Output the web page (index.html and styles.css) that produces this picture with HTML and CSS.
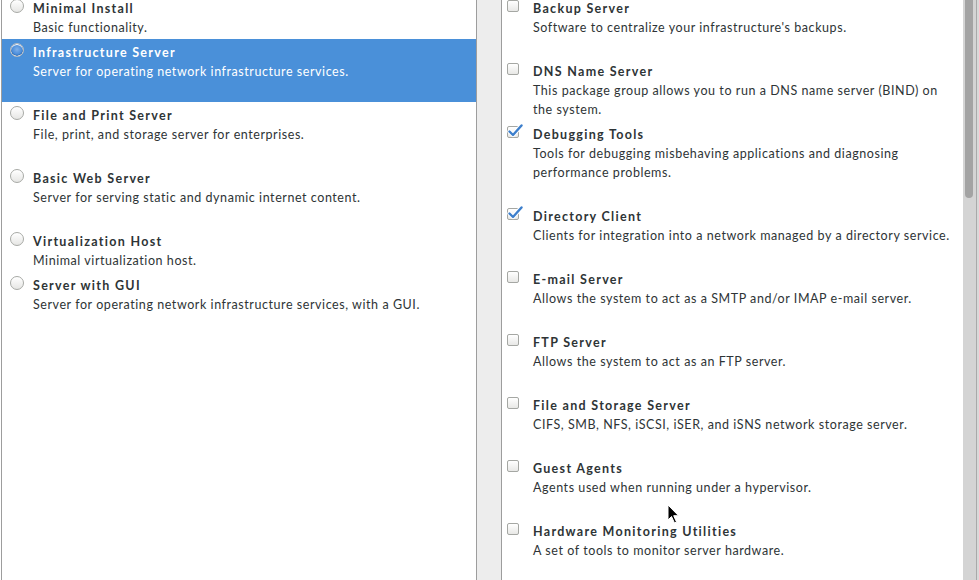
FILE: index.html
```html
<!DOCTYPE html>
<html>
<head>
<meta charset="utf-8">
<link rel="stylesheet" href="styles.css">
</head>
<body>
<div class="screen">
  <div class="left-wrap">
    <div class="panel left">
      <div class="list">
        <div class="env short">
          <span class="radio"></span>
          <div class="text"><div class="title">Minimal Install</div><div class="desc">Basic functionality.</div></div>
        </div>
        <div class="env selected">
          <span class="radio on"></span>
          <div class="text"><div class="title">Infrastructure Server</div><div class="desc">Server for operating network infrastructure services.</div></div>
        </div>
        <div class="env">
          <span class="radio"></span>
          <div class="text"><div class="title">File and Print Server</div><div class="desc">File, print, and storage server for enterprises.</div></div>
        </div>
        <div class="env">
          <span class="radio"></span>
          <div class="text"><div class="title">Basic Web Server</div><div class="desc">Server for serving static and dynamic internet content.</div></div>
        </div>
        <div class="env short">
          <span class="radio"></span>
          <div class="text"><div class="title">Virtualization Host</div><div class="desc">Minimal virtualization host.</div></div>
        </div>
        <div class="env short">
          <span class="radio"></span>
          <div class="text"><div class="title">Server with GUI</div><div class="desc">Server for operating network infrastructure services, with a GUI.</div></div>
        </div>
      </div>
    </div>
  </div>
  <div class="gap"></div>
  <div class="panel right">
    <div class="content">
      <div class="list">
        <div class="addon">
          <span class="check"></span>
          <div class="text"><div class="title">Backup Server</div><div class="desc">Software to centralize your infrastructure's backups.</div></div>
        </div>
        <div class="addon tight">
          <span class="check"></span>
          <div class="text"><div class="title">DNS Name Server</div><div class="desc">This package group allows you to run a DNS name server (BIND) on the system.</div></div>
        </div>
        <div class="addon">
          <span class="check on"><svg viewBox="0 0 16 14" width="16" height="14"><path d="M2.5 7.5 L6 11 L14.5 1.5" fill="none" stroke="#ffffff" stroke-width="4.2" stroke-linecap="round" stroke-linejoin="round"/><path d="M2.5 7.5 L6 11 L14.5 1.5" fill="none" stroke="#3d7fcc" stroke-width="2.4" stroke-linecap="round" stroke-linejoin="round"/></svg></span>
          <div class="text"><div class="title">Debugging Tools</div><div class="desc">Tools for debugging misbehaving applications and diagnosing performance problems.</div></div>
        </div>
        <div class="addon">
          <span class="check on"><svg viewBox="0 0 16 14" width="16" height="14"><path d="M2.5 7.5 L6 11 L14.5 1.5" fill="none" stroke="#ffffff" stroke-width="4.2" stroke-linecap="round" stroke-linejoin="round"/><path d="M2.5 7.5 L6 11 L14.5 1.5" fill="none" stroke="#3d7fcc" stroke-width="2.4" stroke-linecap="round" stroke-linejoin="round"/></svg></span>
          <div class="text"><div class="title">Directory Client</div><div class="desc">Clients for integration into a network managed by a directory service.</div></div>
        </div>
        <div class="addon">
          <span class="check"></span>
          <div class="text"><div class="title">E-mail Server</div><div class="desc">Allows the system to act as a SMTP and/or IMAP e-mail server.</div></div>
        </div>
        <div class="addon">
          <span class="check"></span>
          <div class="text"><div class="title">FTP Server</div><div class="desc">Allows the system to act as an FTP server.</div></div>
        </div>
        <div class="addon">
          <span class="check"></span>
          <div class="text"><div class="title">File and Storage Server</div><div class="desc">CIFS, SMB, NFS, iSCSI, iSER, and iSNS network storage server.</div></div>
        </div>
        <div class="addon">
          <span class="check"></span>
          <div class="text"><div class="title">Guest Agents</div><div class="desc">Agents used when running under a hypervisor.</div></div>
        </div>
        <div class="addon">
          <span class="check"></span>
          <div class="text"><div class="title">Hardware Monitoring Utilities</div><div class="desc">A set of tools to monitor server hardware.</div></div>
        </div>
      </div>
    </div>
    <div class="scrollbar"><div class="thumb"></div></div>
    <div class="edge"></div>
  </div>
</div>
<svg class="cursor" width="14" height="22" viewBox="0 0 14 22"><path d="M1 1 L1 16 L4.5 12.5 L7.5 19 L9.5 18 L6.7 11.7 L11.5 11.7 Z" fill="#000" stroke="#fff" stroke-width="1" stroke-linejoin="round"/></svg>
</body>
</html>
```
FILE: styles.css
```css
html, body {
  margin: 0;
  padding: 0;
  background: #ffffff;
  overflow: hidden;
}
body {
  width: 979px;
  height: 580px;
  position: relative;
  font-family: "Lato", "DejaVu Sans", sans-serif;
  font-size: 12.5px;
  color: #2e3436;
}
.screen {
  display: flex;
  height: 580px;
}
.left-wrap {
  padding-left: 1px;
  background: #ffffff;
}
.panel {
  background: #ffffff;
  height: 580px;
  overflow: hidden;
}
.left {
  width: 474px;
  border-left: 1px solid #9d9d9d;
  border-right: 1px solid #9d9d9d;
}
.gap {
  width: 24px;
  background: #ededed;
}
.right {
  flex: 1;
  display: flex;
  border-left: 1px solid #9d9d9d;
}
.content {
  flex: 1;
  overflow: hidden;
}
.list {
  margin-top: -5px;
}
.env, .addon {
  display: flex;
  align-items: flex-start;
  padding: 4px 0 2px;
  min-height: 57px;
  box-sizing: content-box;
}
.env.short {
  min-height: 38px;
}
.addon.tight {
  min-height: 57px;
}
.addon:nth-child(3) {
  min-height: 76px;
}
.env.selected {
  background: #4a90d9;
  color: #ffffff;
}
.text {
  line-height: 19px;
}
.title {
  font-weight: bold;
  letter-spacing: 1.3px;
}
.desc {
  letter-spacing: 0.56px;
}
.env .text {
  margin-left: 9px;
}
.addon .text {
  margin-left: 14px;
  width: 425px;
}
.radio {
  width: 12px;
  height: 12px;
  margin: 0 0 0 8px;
  border-radius: 50%;
  border: 1px solid #a7a9a5;
  background: linear-gradient(#ffffff, #e6e6e4);
  flex: none;
  box-shadow: inset 0 1px 0 #ffffff;
}
.radio.on {
  border-color: #b8bcc0;
  background: radial-gradient(circle at 50% 45%, #7fb0ea 0, #4a8ddb 55%, #2f6db5 68%, #eef2f6 72%, #ffffff 100%);
}
.check {
  width: 10px;
  height: 10px;
  margin: 1px 0 0 5px;
  border: 1px solid #a5a7a3;
  border-radius: 2px;
  background: linear-gradient(#ffffff, #e8e8e6);
  flex: none;
  position: relative;
}
.check svg {
  position: absolute;
  left: -1px;
  top: -3px;
}
.scrollbar {
  width: 13px;
  background: #d4d4d4;
  flex: none;
}
.thumb {
  width: 8px;
  height: 198px;
  margin-left: 2px;
  background: #a3a3a3;
  border-radius: 0 0 4px 4px;
}
.edge {
  width: 3px;
  flex: none;
  border-left: 1px solid #a9a9a9;
  box-sizing: border-box;
  background: #d9d9d9;
}
.cursor {
  position: absolute;
  left: 667px;
  top: 504px;
}
```
